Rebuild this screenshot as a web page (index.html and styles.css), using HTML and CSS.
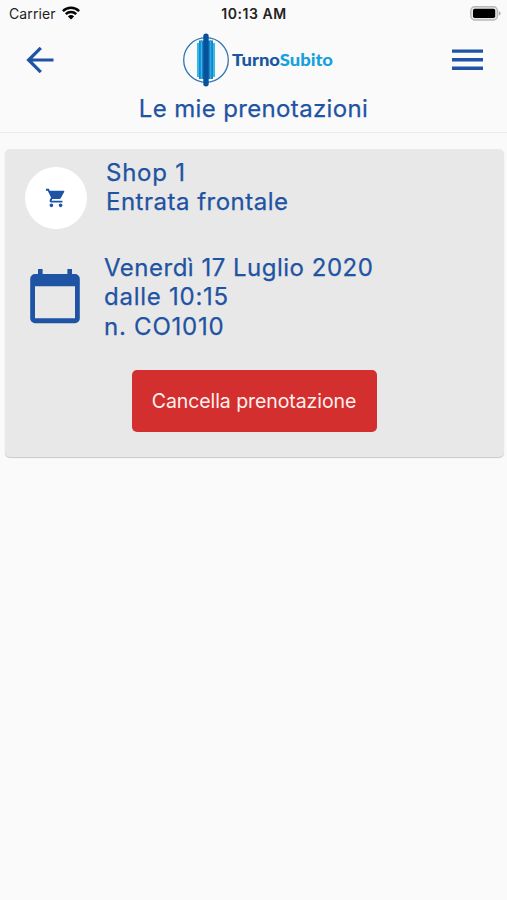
FILE: index.html
```html
<!DOCTYPE html>
<html lang="it">
<head>
<meta charset="utf-8">
<title>Le mie prenotazioni</title>
<link rel="stylesheet" href="styles.css">
</head>
<body>
<header class="header">
  <div class="status">
    <div class="carrier"><span>Carrier</span>
      <svg class="wifi" width="18" height="14" viewBox="0 0 18 14"><g fill="none" stroke="#050505" stroke-width="2.5"><path d="M.9 5.1a11.7 11.7 0 0 1 16.2 0"/><path d="M3.8 8.2a7.4 7.4 0 0 1 10.4 0"/></g><path d="M9 13.6 5.9 10.5a4.5 4.5 0 0 1 6.2 0z" fill="#050505"/></svg>
    </div>
    <span class="time">10:13 AM</span>
    <svg class="battery" width="31" height="15" viewBox="0 0 31 15"><rect x=".8" y=".8" width="26.6" height="13.2" rx="4" fill="#e8e8e8" stroke="#b8b8b8" stroke-width="1.4"/><rect x="3" y="2.8" width="22.2" height="9.2" rx="1.8" fill="#000"/><path d="M28.8 5.2c2.4.6 2.4 3.8 0 4.4z" fill="#aaa"/></svg>
  </div>
  <div class="toolbar">
    <svg class="back" width="28" height="28" viewBox="0 0 28 28" fill="none" stroke="#1f53a3" stroke-width="3.2"><path d="M27.5 14H2.7M14.8 1.8 2.6 14l12.2 12.2"/></svg>
    <svg class="logo" width="152" height="54" viewBox="0 0 152 54">
      <circle cx="24" cy="27" r="22.3" fill="none" stroke="#3274b5" stroke-width="1.3"/>
      <rect x="15" y="10" width="18" height="34" fill="#36b8e8"/>
      <rect x="17" y="7.5" width="14" height="38.500" fill="#1687cb"/>
      <rect x="18.800" y="7" width="1.200" height="39" fill="#38b5e6"/><rect x="28" y="7" width="1.200" height="39" fill="#38a5dc"/>
      <rect x="21.300" y=".5" width="5.400" height="53" rx="2.700" fill="#075298"/>
      <text class="brand" x="50" y="33" textLength="101" lengthAdjust="spacingAndGlyphs"><tspan fill="#1b57a0">Turno</tspan><tspan fill="#17a0dc">Subito</tspan></text>
    </svg>
    <svg class="menu" width="31" height="22" viewBox="0 0 31 22" fill="#1f53a3"><path d="M0 .4h31v3.4H0zM0 9h31v3.4H0zM0 17.5h31v3.4H0z"/></svg>
  </div>
  <h1 class="title">Le mie prenotazioni</h1>
</header>
<main class="card">
  <section class="row shop">
    <div class="avatar"><svg width="22" height="22" viewBox="0 0 24 24" fill="#1f53a3"><path d="M7 18c-1.1 0-1.99.9-1.99 2S5.9 22 7 22s2-.9 2-2-.9-2-2-2zM1 2v2h2l3.6 7.59-1.35 2.45c-.16.28-.25.61-.25.96 0 1.1.9 2 2 2h12v-2H7.42c-.14 0-.25-.11-.25-.25l.03-.12.9-1.63h7.45c.75 0 1.41-.41 1.75-1.03l3.58-6.49A1 1 0 0 0 20 4H5.21l-.94-2H1zm16 16c-1.1 0-1.99.9-1.99 2s.89 2 1.99 2 2-.9 2-2-.9-2-2-2z"/></svg></div>
    <div class="lines"><p class="name">Shop 1</p><p class="place">Entrata frontale</p></div>
  </section>
  <section class="row booking">
    <svg class="calendar" width="50" height="55" viewBox="0 0 50 55" fill="#1f53a3"><path fill-rule="evenodd" d="M8 0h4.6v5h24.8V0H42v5h3a4.8 4.8 0 0 1 4.8 4.8v39.6A4.8 4.8 0 0 1 45 54.2H5A4.8 4.8 0 0 1 .2 49.4V9.8A4.8 4.8 0 0 1 5 5h3zM5 17.2v32h40v-32z"/></svg>
    <div class="lines"><p class="day">Venerdì 17 Luglio 2020</p><p class="hour">dalle 10:15</p><p class="code">n. CO1010</p></div>
  </section>
  <button class="cancel" type="button">Cancella prenotazione</button>
</main>
</body>
</html>
```
FILE: styles.css
```css
* { box-sizing: border-box; }
body { margin: 0; min-height: 900px; background: #fafafa; color: #1f53a3; font-family: Inter, "Liberation Sans", sans-serif; }
h1, p { margin: 0; }
svg { display: block; flex: none; }
.header { height: 133px; border-bottom: 1px solid #ececec; }
.status { display: grid; grid-template-columns: 1fr auto 1fr; align-items: center; height: 27px; padding: 0 7px 0 8px; color: #222; font-size: 14px; }
.carrier { display: flex; align-items: center; gap: 6px; padding-left: 1px; letter-spacing: .1px; }
.wifi { margin-top: -2px; }
.time { font-weight: 600; letter-spacing: .55px; }
.battery { justify-self: end; margin-right: -1px; }
.toolbar { display: flex; justify-content: space-between; align-items: center; height: 67px; padding: 0 24px 1px 26px; }
.logo { margin-left: 9px; }
.brand { font: 900 17px Lato, sans-serif; }
.title { font-size: 24px; font-weight: 400; line-height: 30px; text-align: center; -webkit-text-stroke: .25px; letter-spacing: .35px; }
.card { display: flex; flex-direction: column; height: 308px; margin: 16px 3px 0 5px; padding: 9px 20px 0; background: #e8e8e8; border-radius: 5px; box-shadow: 0 1px 1px #c8c8c8; }
.row { display: flex; }
.lines { font-size: 24px; line-height: 29.4px; -webkit-text-stroke: .25px; letter-spacing: .5px; white-space: nowrap; }
.name, .hour, .code { letter-spacing: .75px; }
.avatar { display: grid; place-items: center; width: 62px; height: 62px; margin: 9px 19px 0 0; border-radius: 50%; background: #fff; }
.booking { margin-top: 24px; }
.calendar { margin: 16px 24px 0 5px; }
.cancel { align-self: center; width: 245px; height: 62px; margin: 29px 0 0 -1px; padding: 0; border: 0; border-radius: 5px; background: #d32f2f; color: #fff0ee; font: 400 19.5px Inter, sans-serif; letter-spacing: -.08px; }
```
